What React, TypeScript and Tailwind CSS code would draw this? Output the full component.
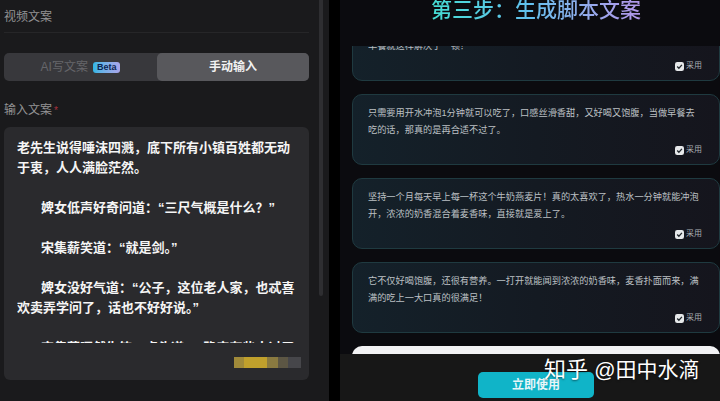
const cjk = { fontFamily: '"Liberation Sans", "Noto Sans CJK SC", sans-serif' };

const cards = [
  { text: "每天早上来一杯，香浓顺滑又方便，上班族真的太需要了，营养也跟得上，\n早餐就这样解决了一顿！" },
  { text: "只需要用开水冲泡1分钟就可以吃了，口感丝滑香甜，又好喝又饱腹，当做早餐去\n吃的话，那真的是再合适不过了。" },
  { text: "坚持一个月每天早上每一杯这个牛奶燕麦片！真的太喜欢了，热水一分钟就能冲泡开，浓浓的奶香混合着麦香味，直接就是爱上了。" },
  { text: "它不仅好喝饱腹，还很有营养。一打开就能闻到浓浓的奶香味，麦香扑面而来，满满的吃上一大口真的很满足！" },
];

const CheckBox = () => (
  <svg width="9" height="9" viewBox="0 0 9 9">
    <rect x="0" y="0" width="9" height="9" rx="2.2" fill="#e6e8ea" />
    <path d="M2.2 4.5 L3.9 6.2 L6.9 2.9" stroke="#20262c" strokeWidth="1.3" fill="none" />
  </svg>
);

const ScriptCard = ({ text, first }: { text: string; first?: boolean }) => (
  <div
    className={`shrink-0 h-[71px] flex flex-col rounded-[10px] border border-[#1f3a40] bg-gradient-to-r from-[#14212a] via-[#141a22] to-[#15151d] pl-[15px] pr-[15px] pt-[10px] ${
      first ? "-mt-[36px]" : ""
    }`}
  >
    <p className="h-[35px] text-[9.2px] leading-[17px] text-[#bcc0c4] whitespace-pre-line overflow-hidden">{text}</p>
    <div className="mt-[4px] pr-[2px] flex items-center justify-end gap-[2px] text-[8px] text-[#a9adb1]">
      <CheckBox />
      <span>采用</span>
    </div>
  </div>
);

export default function App() {
  return (
    <div className="relative w-[720px] h-[401px] flex overflow-hidden bg-[#0b0b0f]" style={cjk}>
      {/* left panel */}
      <div className="w-[329px] h-full flex bg-[#1a1a1c]">
        <div className="w-[319px] shrink-0 pl-[4px] pr-[10px] flex flex-col">
          <div className="h-[33px] flex items-center text-[12px] text-[#939394] border-b border-[#262628] pt-[1px] mb-[20px]">
            视频文案
          </div>
          <div className="h-[28px] flex rounded-[5px] bg-[#38383c] text-[12px]">
            <div className="w-[153px] flex items-center justify-center gap-[5px] text-[#66666a]">
              <span>AI写文案</span>
              <span className="px-[4px] h-[11px] flex items-center rounded-[3px] bg-gradient-to-r from-[#2cb6e6] to-[#a9a5ea] text-[9px] leading-none font-bold text-[#0d2452]">
                Beta
              </span>
            </div>
            <div className="flex-1 flex items-center justify-center rounded-[5px] bg-[#58585c] text-[#f2f2f2] font-bold">
              手动输入
            </div>
          </div>
          <div className="mt-[20px] h-[18px] flex items-center gap-[2px] text-[12px] text-[#939394]">
            输入文案<span className="text-[#a8323c] text-[10px]">*</span>
          </div>
          <div className="relative mt-[8px] h-[253px] rounded-[6px] bg-[#2a2a2d] pl-[13px] pr-[12px] pt-[11px]">
            <div className="h-[205px] overflow-hidden text-[13px] leading-[20px] font-bold text-[#f5f5f5]">
              <p>老先生说得唾沫四溅，底下所有小镇百姓都无动于衷，人人满脸茫然。</p>
              <p className="mt-[20px] indent-[24px]">婢女低声好奇问道：“三尺气概是什么？”</p>
              <p className="mt-[20px] indent-[24px]">宋集薪笑道：“就是剑。”</p>
              <p className="mt-[20px] indent-[24px]">婢女没好气道：“公子，这位老人家，也忒喜欢卖弄学问了，话也不好好说。”</p>
              <p className="mt-[20px] indent-[24px]">宋集薪哑然失笑，点头道：“确实有些太过了</p>
            </div>
            {/* mosaic */}
            <div className="absolute left-[230px] top-[230px] w-[67px] h-[11px] flex">
              <div className="w-[10px] bg-[#a08a3a]" />
              <div className="w-[23px] bg-[#c0a02c]" />
              <div className="w-[11px] bg-[#8a7a40]" />
              <div className="w-[10px] bg-[#5c5644]" />
              <div className="flex-1 bg-[#46464a]" />
            </div>
          </div>
        </div>
        <div className="w-[4px] h-[296px] bg-[#2e2e31] rounded-b-[2px]" />
      </div>

      <div className="w-[11px] h-full bg-black" />

      {/* right panel */}
      <div className="flex-1 h-full flex flex-col bg-[#0b0b0f]">
        <div className="relative z-10 h-[46px] shrink-0 flex justify-center bg-[#0b0b0f]">
          <span className="-mt-[4px] h-[28px] text-[21px] leading-[28px] font-medium pl-[12px] text-transparent bg-clip-text bg-gradient-to-r from-[#3fe0cf] via-[#62c0ee] to-[#b295ea]">
            第三步：生成脚本文案
          </span>
        </div>
        <div className="flex-1 flex flex-col gap-[13px] pl-[12px] overflow-hidden">
          {cards.map((c, i) => (
            <ScriptCard key={i} text={c.text} first={i === 0} />
          ))}
          <div className="h-[30px] shrink-0 rounded-t-[10px] bg-[#f2f2f4]" />
        </div>
        <div className="h-[47px] shrink-0 bg-[#171717] flex items-start justify-center pt-[18px] pl-[12px]">
          <div className="w-[116px] h-[26px] rounded-[5px] bg-[#10b4c8] flex items-center justify-center text-[12px] font-bold text-[#e8f6f8]">
            立即使用
          </div>
        </div>
      </div>

      {/* watermark */}
      <div className="absolute left-[544px] top-[355px] text-[22px] leading-[30px] text-white whitespace-nowrap [text-shadow:0_1px_2px_rgba(0,0,0,0.5)]">
        知乎 <span className="text-[21px]">@田中水滴</span>
      </div>
    </div>
  );
}
